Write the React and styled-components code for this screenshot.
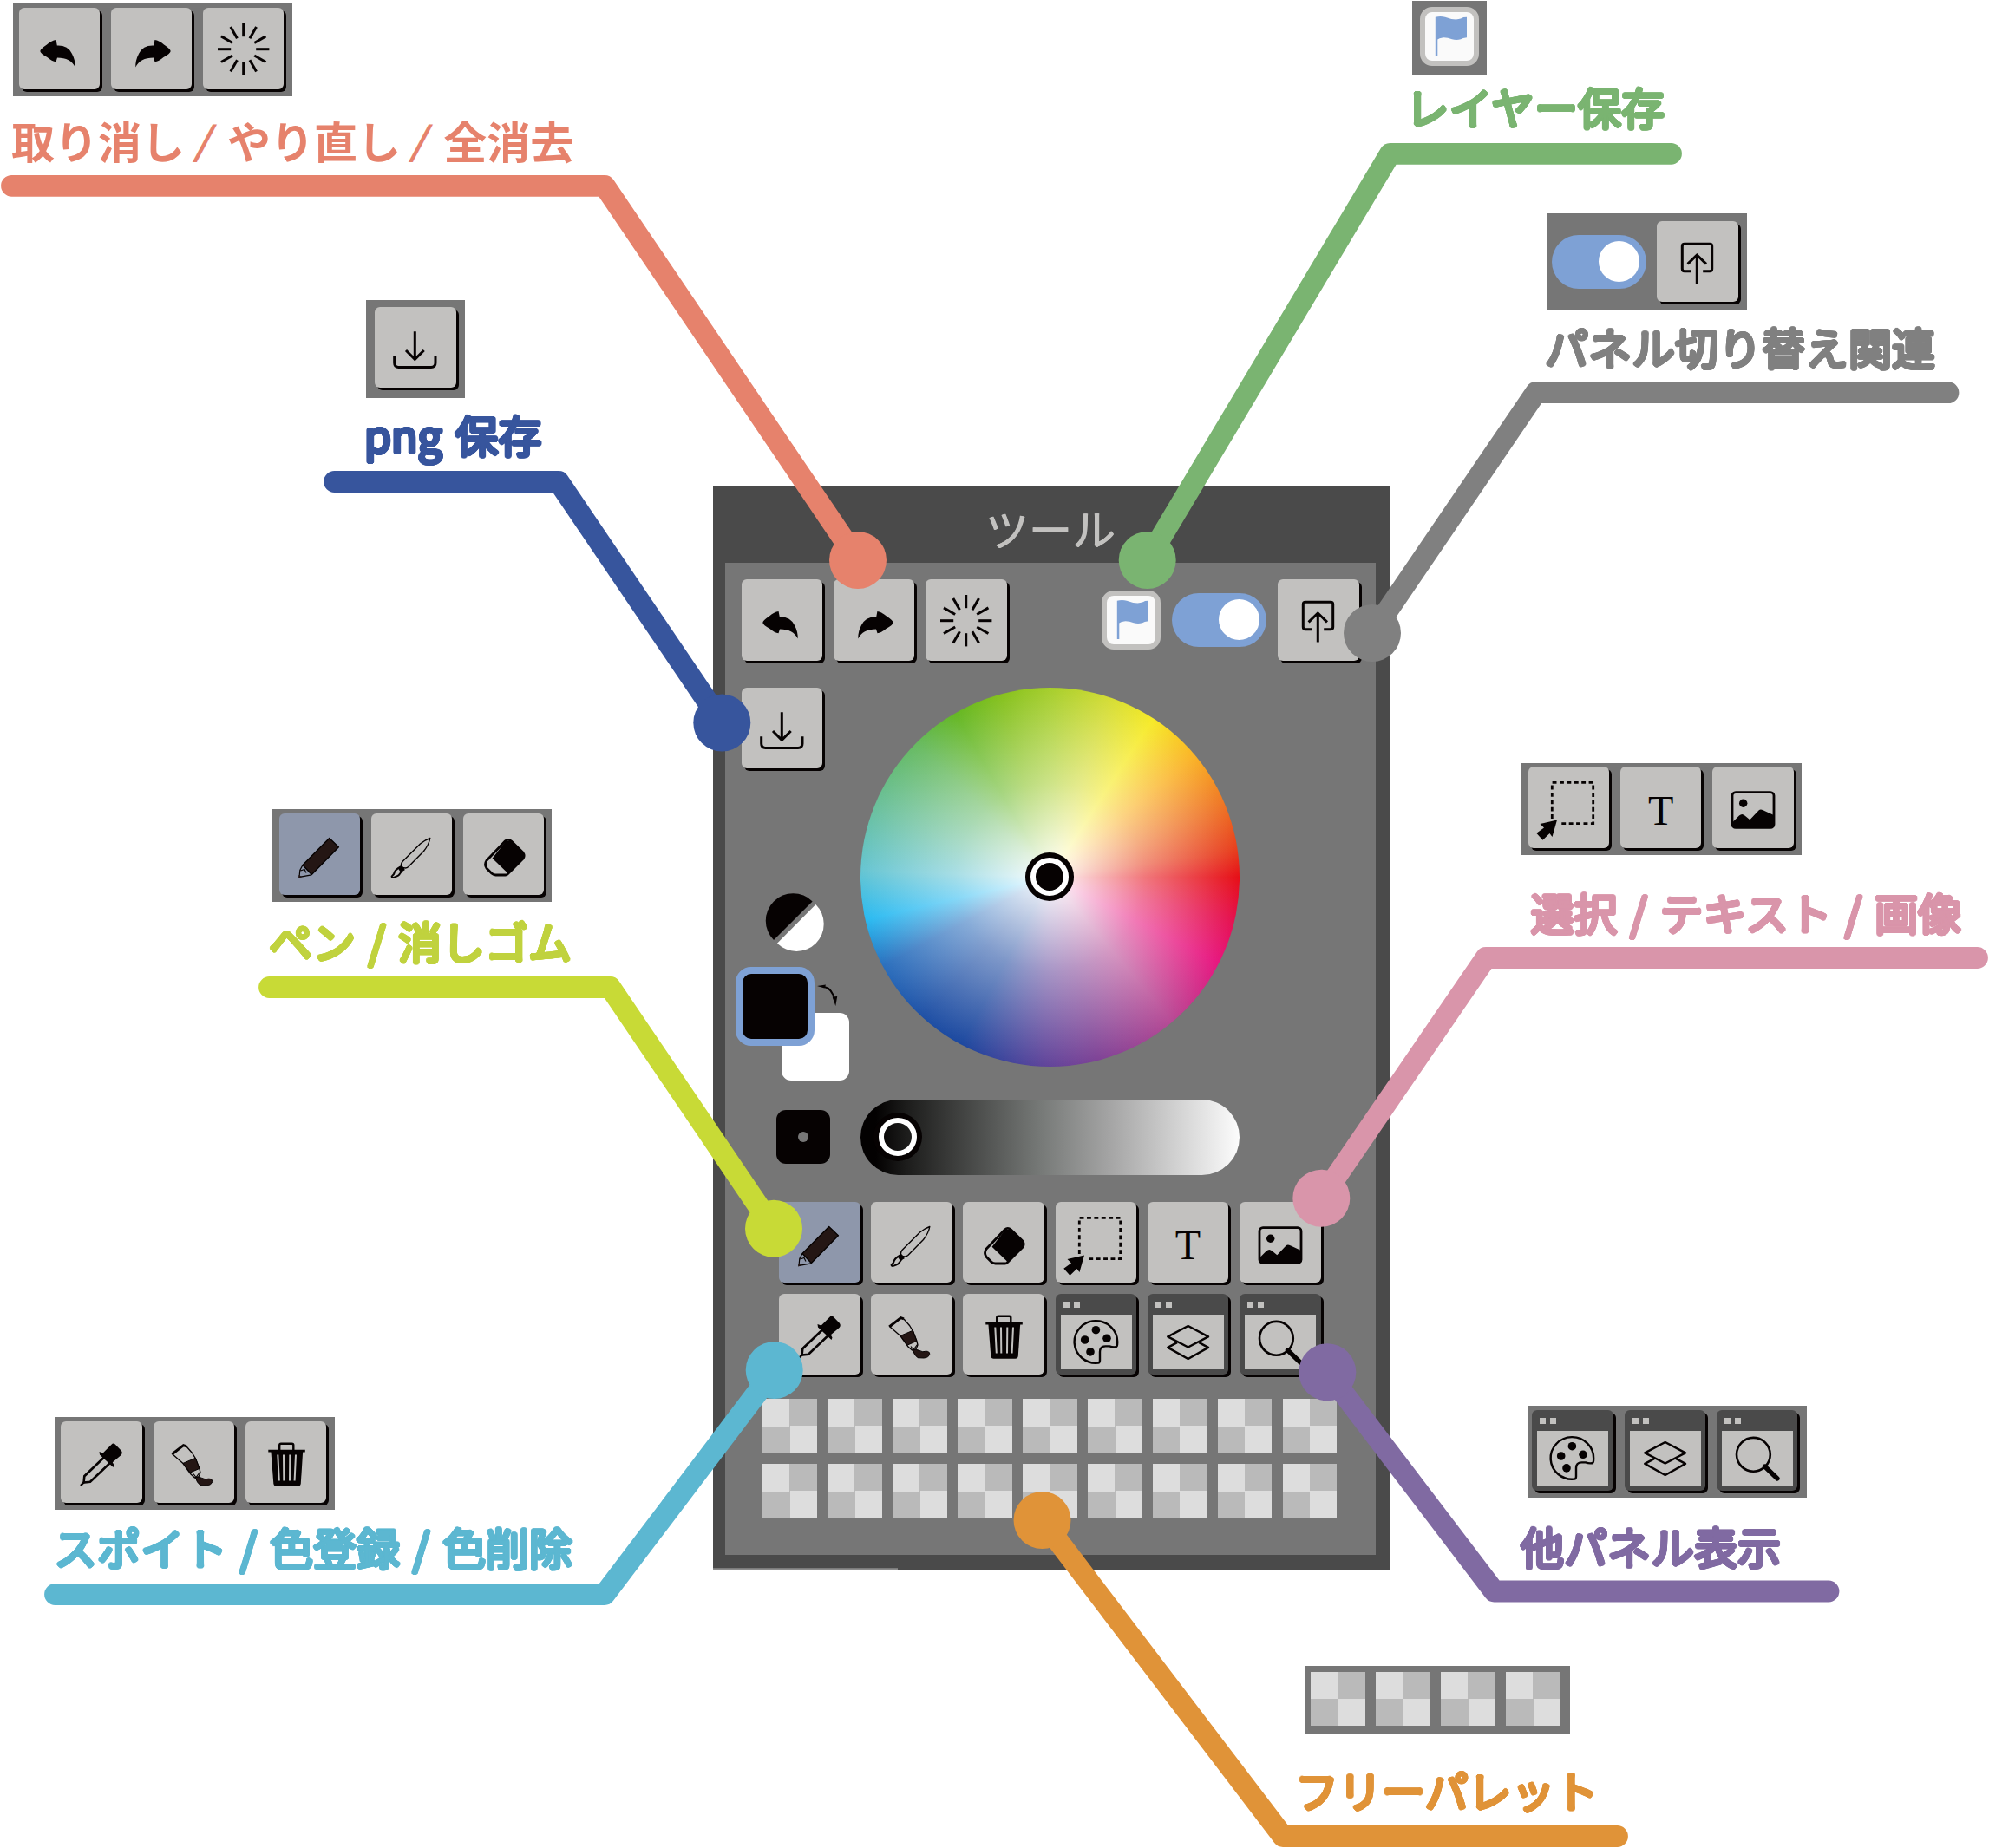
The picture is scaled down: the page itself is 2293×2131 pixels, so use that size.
import React from "react";
import styled, { createGlobalStyle, css } from "styled-components";

const GlobalStyle = createGlobalStyle`
  body { margin: 0; background: #fff; }
  * { box-sizing: border-box; }
`;

const ink = "#060202";
const face = "#c2c1bf";
const dark = "#4a4a4a";
const mid = "#767676";
const blue = "#7ea1d5";

const Board = styled.main`
  position: relative;
  width: 2293px;
  height: 2131px;
  overflow: hidden;
  background: #fff;
  font-family: "Noto Sans CJK JP", "Noto Sans", sans-serif;
`;

/* ---------- buttons ---------- */

const Key = styled.button`
  flex: none;
  display: flex;
  align-items: center;
  justify-content: center;
  width: 93.6px;
  height: 93.6px;
  padding: 0;
  border: 0;
  border-radius: 6px;
  color: ${ink};
  background: ${(p) => (p.$active ? "#8e97ab" : face)};
  box-shadow: 3px 3px 0 ${ink};
`;

const WindowKey = styled(Key)`
  background:
    linear-gradient(${face}, ${face}) 9px 9px / 7px 7px no-repeat,
    linear-gradient(${face}, ${face}) 21px 9px / 7px 7px no-repeat,
    linear-gradient(${face}, ${face}) 6px 24px / 82px 63px no-repeat,
    ${dark};
`;

const Glyph = styled.svg`
  flex: none;
  display: block;
  width: 93.6px;
  height: 93.6px;
  fill: none;
  stroke: currentColor;
  stroke-width: 3;
`;

const Letter = styled.span`
  font: 48px/1 "Liberation Serif", serif;
  padding-top: 7px;
  opacity: 0.999;
`;

const FlagBox = styled.div`
  flex: none;
  width: 68px;
  height: 68px;
  border: 6px solid ${face};
  border-radius: 14px;
  background: #fafafa;
  color: ${blue};
`;

const FlagSvg = styled.svg`
  display: block;
  width: 56px;
  height: 56px;
`;

const Track = styled.div`
  flex: none;
  display: flex;
  align-items: center;
  justify-content: flex-end;
  width: 109px;
  height: 62px;
  padding-right: 8px;
  border-radius: 31px;
  background: ${blue};
`;

const Knob = styled.div`
  width: 47px;
  height: 47px;
  border-radius: 50%;
  background: #fff;
`;

const undoPath =
  "M24.3 50Q24.6 47.4 32 42.5Q37.5 37.6 42.6 37L43.8 43.6Q56 43 61 53Q65 60.5 64.7 68.5Q59.5 57.6 44 57.5L42.5 62.3Q38 61.8 32.5 57Q24.8 53 24.3 50Z";

const glyphs = {
  undo: <path d={undoPath} fill="currentColor" stroke="none" />,
  redo: <path d={undoPath} fill="currentColor" stroke="none" transform="translate(93 0) scale(-1 1)" />,
  clear: (
    <g transform="translate(46.7 47.7)" strokeWidth="3">
      {Array.from({ length: 12 }, (_, i) => (
        <path key={i} d="M0 -14.5V-29.7" transform={`rotate(${i * 30})`} />
      ))}
    </g>
  ),
  download: (
    <>
      <path d="M46.3 28.3V60M36 50L46.3 60.3L56.7 50" />
      <path d="M22.7 56.3V64.5Q22.7 69.4 27.5 69.4H65Q70 69.4 70 64.5V56.3" />
    </>
  ),
  detach: (
    <>
      <path d="M39.8 57.7H32Q29.3 57.7 29.3 55V29Q29.3 26.3 32 26.3H61Q63.7 26.3 63.7 29V55Q63.7 57.7 61 57.7H53.2" />
      <path d="M46.3 72.5V39.5M35.6 49.4L46.3 39L57 49.4" />
    </>
  ),
  pen: (
    <>
      <path d="M57.7 28.6L68.4 38.7L37.3 70.6L27 59.5Z" fill="#241614" strokeWidth="1.4" strokeLinejoin="round" />
      <path d="M27 59.5L23.8 65.5L23 73.4L37 70.8M24.5 66L29 64.5L31 68.5" strokeWidth="1.2" />
      <path d="M22.4 71L26 73L22.4 74.5Z" fill="#241614" stroke="none" />
    </>
  ),
  brush: (
    <g strokeWidth="1.4" strokeLinejoin="round">
      <path d="M67.8 28.5Q62 30.5 56.5 35L36 55.5Q33.6 59 35 61.5Q39.5 64.4 42.8 61.5L60.5 43.5Q66.5 36 67.8 28.5Z" />
      <path d="M33.8 61.5Q27 65 26 70L23.6 72.7Q24 74.5 26.5 73.6Q32 72 33 69.5L37 64Z" strokeWidth="2" />
      <path d="M31.5 63L34.8 60.8L38 65L34 67Z" fill="currentColor" />
    </g>
  ),
  eraser: (
    <>
      <path
        d="M48.5 31.8Q51.8 28.8 55.5 32L68.8 45Q71.4 48.8 68.8 52.3L51.6 69.6Q50.3 71 48.5 71H37.5Q35 71 33 69.3L27 63.2Q24 58.8 27 54.2Z"
        strokeWidth="2.8"
        strokeLinejoin="round"
      />
      <path d="M33.6 51.8L49 32L56 32L69 46V52L51.5 69Z" fill="currentColor" stroke="none" />
    </>
  ),
  select: (
    <>
      <path d="M27.3 60V18.3H74.7V65.7H37.3" strokeWidth="2.8" strokeDasharray="4.9 3.5" />
      <path d="M33 61.5L13.5 66L18 70.5L9.3 76.8L16.5 84.7L24.5 77L27.5 81Z" fill="currentColor" stroke="none" />
    </>
  ),
  image: (
    <>
      <rect x="23" y="29.6" width="48" height="40.8" rx="4" strokeWidth="2.8" />
      <circle cx="35.7" cy="42.3" r="4.7" fill="currentColor" stroke="none" />
      <path
        d="M23 64.5L31 56.5Q34.3 53.5 37.5 56.5L43.3 61.3L53.5 50.5Q55.5 48.6 58.5 50.3L71 56V70H23Z"
        fill="currentColor"
        stroke="none"
      />
    </>
  ),
  dropper: (
    <>
      <path
        d="M58.5 26.8Q60.5 24.5 62.8 26.5L69.8 33.8Q71.8 36.2 69.6 39L59.8 47.2L61.5 50.5L60.5 53L45 38.5L44.5 35L48.7 36.6Z"
        fill="currentColor"
        stroke="none"
      />
      <path d="M50 41.5L27.3 63.2L26.6 70.5L34 69.8L56.8 48" strokeWidth="2.6" />
      <path d="M27 70L23 74" strokeWidth="2.4" />
    </>
  ),
  tube: (
    <>
      <path d="M21.2 38L34.5 27.6L38 28.8" strokeWidth="3" />
      <path d="M22 38L34 48.5M38 29L44.5 36.5L48.5 43L52.8 54L54 59L52 64L47.5 65L43 61L34 48.5" strokeWidth="1.3" />
      <path d="M34 48.4L48.4 42.3L52.8 54.5L42.3 59Z" fill="#241614" strokeWidth="1" />
      <path d="M46 60.5L49 64.5L53.5 58.5" strokeWidth="1.2" />
      <path
        d="M48.3 64.5Q52 63.5 55.5 65.3Q60 67.8 63.5 66.2Q67.8 66.2 67.7 69.5Q67 73.4 61 74L54 73.7Q50 71 48.3 64.5Z"
        fill="#241614"
        strokeWidth="1"
      />
    </>
  ),
  trash: (
    <>
      <path d="M39.2 33V27.5Q39.2 25.8 41 25.8H53.5Q55.3 25.8 55.3 27.5V33" strokeWidth="2.4" />
      <path d="M26.3 34.2H68.8" strokeWidth="2.8" />
      <path d="M29.4 34.5H66.2L63.8 71.5Q63.4 74.7 60.5 74.7H35.5Q32.7 74.7 32.3 71.5Z" fill="currentColor" stroke="none" />
      <path d="M37.3 38.5L38.8 68.5M44 38.5L44.3 68.5M51.3 38.5L51 68.5M58 38.5L56.6 68.5" stroke={face} strokeWidth="2" />
    </>
  ),
  palette: (
    <>
      <path
        d="M69.5 61.2Q71.2 61 71.2 56A24.8 24.3 0 1 0 49 79.6Q51 79.4 51 76.5V67Q51 60.4 57.5 60.4H62Q66 61.8 69.5 61.2Z"
        strokeWidth="2.4"
      />
      <g fill="currentColor" stroke="none">
        <circle cx="46.4" cy="41.7" r="4.8" />
        <circle cx="33.7" cy="53" r="4.8" />
        <circle cx="59" cy="51.3" r="4.8" />
        <circle cx="40" cy="66.9" r="4.8" />
      </g>
    </>
  ),
  layers: (
    <g strokeWidth="2.5" strokeLinejoin="round">
      <path d="M46.7 37L70 49.4L46.7 61.5L23.3 49.4Z" />
      <path d="M34 56.2L23.3 61.9L46.7 75L70 61.9L59.3 56.2" />
    </g>
  ),
  search: (
    <>
      <circle cx="42.4" cy="51.3" r="19.4" strokeWidth="2.6" />
      <path d="M55.5 65L70 79" strokeWidth="5.4" strokeLinecap="round" />
    </>
  ),
};

const windowed = ["palette", "layers", "search"];

function Tool({ name, active }) {
  const Base = windowed.includes(name) ? WindowKey : Key;
  return (
    <Base $active={active} aria-label={name}>
      {name === "text" ? <Letter>T</Letter> : <Glyph viewBox="0 0 93.6 93.6">{glyphs[name]}</Glyph>}
    </Base>
  );
}

function Flag() {
  return (
    <FlagBox>
      <FlagSvg viewBox="6 6 56 56">
        <path
          d="M17.8 11.7Q24 10.5 29 11.8Q36 14.5 41.5 14.6Q48 13.5 50 12L54 11.7V35.3Q49 36 47 37.2Q42 38.8 37 37.2Q31 35 26 35.4Q22 36 20.3 37.5V56H17.8Z"
          fill="currentColor"
        />
      </FlagSvg>
    </FlagBox>
  );
}

function Toggle() {
  return (
    <Track>
      <Knob />
    </Track>
  );
}

const Cell = styled.div`
  flex: none;
  width: 62.6px;
  height: 62.6px;
  background: conic-gradient(#bababa 25%, #dddddd 0 50%, #bababa 0 75%, #dddddd 0);
`;

/* ---------- panel ---------- */

const Panel = styled.section`
  position: absolute;
  left: 822px;
  top: 561px;
  display: flex;
  flex-direction: column;
  width: 781px;
  height: 1250px;
  padding: 0 17px 18px 14px;
  background: ${dark};
`;

const PanelTitle = styled.h1`
  flex: none;
  display: flex;
  align-items: center;
  justify-content: center;
  height: 88px;
  margin: 0;
  padding-top: 6px;
  color: ${face};
  font-size: 50px;
  font-weight: 400;
  line-height: 1;
  text-shadow: 0.5px 0 ${face}, -0.5px 0 ${face};
`;

const PanelBody = styled.div`
  flex: 1;
  padding: 19px 19px 0 18.6px;
  background: ${mid};
`;

const TopBar = styled.div`
  display: flex;
  align-items: center;
  gap: 12.6px;
`;

const TopRight = styled.div`
  display: flex;
  align-items: center;
  gap: 13px;
  margin-left: auto;
`;

const ColorArea = styled.div`
  display: grid;
  grid-template-columns: 137.4px 437px;
  margin-top: 31px;
`;

const SideColumn = styled.div`
  display: flex;
  flex-direction: column;
  align-items: flex-start;
`;

const MonoSvg = styled.svg`
  display: block;
  width: 69px;
  height: 69px;
  margin: 143px 0 0 27px;
`;

const SwatchPair = styled.div`
  position: relative;
  width: 131px;
  height: 131px;
  margin: 16.4px 0 0 -7px;
`;

const BackSwatch = styled.div`
  position: absolute;
  right: 0;
  bottom: 0;
  width: 78px;
  height: 78px;
  border-radius: 11px;
  background: #fff;
`;

const FrontSwatch = styled.div`
  position: absolute;
  left: 0;
  top: 0;
  width: 91px;
  height: 91px;
  border: 8px solid ${blue};
  border-radius: 18px;
  background: ${ink};
`;

const SwapSvg = styled.svg`
  position: absolute;
  left: 93px;
  top: 19px;
  width: 26px;
  height: 27px;
`;

const BrushSize = styled.div`
  display: flex;
  align-items: center;
  justify-content: center;
  width: 62px;
  height: 62px;
  margin: 34px 0 0 40px;
  border-radius: 11px;
  background: ${ink};

  &::after {
    content: "";
    width: 12px;
    height: 12px;
    border-radius: 50%;
    background: ${mid};
  }
`;

const WheelColumn = styled.div`
  display: flex;
  flex-direction: column;
  gap: 38px;
`;

const Wheel = styled.div`
  display: flex;
  align-items: center;
  justify-content: center;
  width: 437px;
  height: 437px;
  padding: 0 1px 1px 0;
  border-radius: 50%;
  background:
    radial-gradient(circle closest-side, #fff 0, rgba(255, 255, 255, 0.85) 12%, rgba(255, 255, 255, 0.43) 50%, rgba(255, 255, 255, 0) 100%),
    conic-gradient(
      #a6ce2c 0deg, #d3dc36 18deg, #f6ea28 33deg, #fab326 50deg, #ee7224 68deg, #e73c1c 82deg,
      #e60f17 90deg, #e5104e 103deg, #e7167f 117deg, #b74a95 140deg, #7f4396 165deg,
      #5f449a 182deg, #1c489f 208deg, #1f50a5 222deg, #2b6fbd 242deg, #2abaf1 257deg,
      #66c5d2 272deg, #6ac09c 292deg, #67ba60 315deg, #65b724 330deg, #86c11e 345deg, #a6ce2c 360deg
    );
`;

const ring = css`
  flex: none;
  border: 6px solid #fff;
  border-radius: 50%;
  box-shadow: 0 0 0 6px ${ink};
`;

const WheelMarker = styled.div`
  ${ring}
  width: 44px;
  height: 44px;
  background: ${ink};
`;

const Slider = styled.div`
  display: flex;
  align-items: center;
  height: 87px;
  padding-left: 21px;
  border-radius: 44px;
  background: linear-gradient(90deg, #030101 4%, #1c1c1b 12%, #757876 47%, #a5a5a5 66%, #fcfcfc);
`;

const SliderMarker = styled.div`
  ${ring}
  width: 44px;
  height: 44px;
`;

const ToolGrid = styled.div`
  display: grid;
  grid-template-columns: repeat(6, 93.6px);
  gap: 12.6px;
  margin: 31px 0 0 43.4px;
`;

const SwatchGrid = styled.div`
  display: grid;
  grid-template-columns: repeat(9, 62.6px);
  gap: 12.4px;
  margin: 28px 0 0 24.4px;
`;

const mainTools = [
  "pen", "brush", "eraser", "select", "text", "image",
  "dropper", "tube", "trash", "palette", "layers", "search",
];

function ToolPanel() {
  return (
    <Panel>
      <PanelTitle>ツール</PanelTitle>
      <PanelBody>
        <TopBar>
          <Tool name="undo" />
          <Tool name="redo" />
          <Tool name="clear" />
          <TopRight>
            <Flag />
            <Toggle />
            <Tool name="detach" />
          </TopRight>
        </TopBar>
        <ColorArea>
          <SideColumn>
            <Tool name="download" />
            <MonoSvg viewBox="0 0 69 69">
              <path d="M10 55A31.5 31.5 0 0 1 54.6 10.4Z" fill={ink} />
              <path d="M58.4 14.1A31.5 31.5 0 0 1 14 58.8Z" fill="#fff" />
            </MonoSvg>
            <SwatchPair>
              <BackSwatch />
              <FrontSwatch />
              <SwapSvg viewBox="0 0 26 27">
                <path d="M8 3.5Q19 6 21 19" fill="none" stroke={ink} strokeWidth="1.8" />
                <path d="M1 3L11 1.5L9.5 5.5ZM22.3 26L18.6 15.5L24.2 15Z" fill={ink} />
              </SwapSvg>
            </SwatchPair>
            <BrushSize />
          </SideColumn>
          <WheelColumn>
            <Wheel>
              <WheelMarker />
            </Wheel>
            <Slider>
              <SliderMarker />
            </Slider>
          </WheelColumn>
        </ColorArea>
        <ToolGrid>
          {mainTools.map((name) => (
            <Tool key={name} name={name} active={name === "pen"} />
          ))}
        </ToolGrid>
        <SwatchGrid>
          {Array.from({ length: 18 }, (_, i) => (
            <Cell key={i} />
          ))}
        </SwatchGrid>
      </PanelBody>
    </Panel>
  );
}

/* ---------- callouts ---------- */

const Leaders = styled.svg`
  position: absolute;
  inset: 0;
  width: 2293px;
  height: 2131px;
  fill: none;
  stroke-width: 24.8;
  stroke-linecap: round;
  stroke-linejoin: round;
  pointer-events: none;
`;

const CalloutBox = styled.section`
  position: absolute;
  left: ${(p) => p.$x}px;
  top: ${(p) => p.$y}px;
  display: flex;
  flex-direction: column;
  align-items: flex-start;
`;

const Chip = styled.div`
  display: flex;
  align-items: ${(p) => p.$align || "flex-start"};
  gap: ${(p) => p.$gap || 12.6}px;
  width: ${(p) => p.$w}px;
  height: ${(p) => p.$h}px;
  padding: ${(p) => p.$pad};
  background: ${mid};
`;

/* Offsets on a circle thicken the strokes and round off their ends. */
const halo = (r) =>
  Array.from({ length: 16 }, (_, i) => {
    const a = (i * Math.PI) / 8;
    return `${(Math.cos(a) * r).toFixed(2)}px ${(Math.sin(a) * r).toFixed(2)}px 0 currentColor`;
  }).join(",");

const Label = styled.p`
  margin: ${(p) => p.$gap}px 0 0 ${(p) => p.$shift || 0}px;
  color: ${(p) => p.$color};
  font-size: 50px;
  line-height: 1;
  white-space: nowrap;
  word-spacing: 3.5px;
  ${(p) =>
    p.$sharp
      ? css`
          font-weight: 700;
        `
      : css`
          font-weight: 400;
          text-shadow: ${halo(2)};
        `}
`;

const Slash = styled.span`
  display: inline-block;
  transform: ${(p) => (p.$sharp ? "translateY(-1px) skewX(-14deg) scaleY(0.88)" : "none")};
`;

const callouts = [
  {
    text: "取り消し / やり直し / 全消去", sharp: true, color: "#e6826c",
    x: 15, y: 4, w: 321.5, h: 107, pad: "5px 0 0 6.5px", labelTop: 136, shift: -2,
    items: ["undo", "redo", "clear"],
    line: "13.5,214.3 697,214.3 989,646",
  },
  {
    text: "png 保存", color: "#37559d",
    x: 422, y: 345.5, w: 114, h: 113.5, pad: "8px 0 0 10px", labelTop: 475, shift: -2,
    items: ["download"],
    line: "385.5,555.5 644,555.5 832.3,833.5",
  },
  {
    text: "レイヤー保存", color: "#7ab471",
    x: 1627.5, y: 1, w: 86.5, h: 86, pad: "7px 0 0 9.5px", labelTop: 97, shift: -7,
    items: ["flag"],
    line: "1926.5,177.3 1602.5,177.3 1322.7,646",
  },
  {
    text: "パネル切り替え関連", color: "#808080",
    x: 1783, y: 246, w: 231, h: 111, pad: "0 0 0 6px", align: "center", gap: 12.4, labelTop: 373.5, shift: -2,
    items: ["toggle", "detach"],
    line: "2246,452.7 1770.5,452.7 1582,730",
  },
  {
    text: "ペン / 消しゴム", color: "#c0d23e", lineColor: "#c8da36",
    x: 313, y: 933, w: 323, h: 107, pad: "5px 0 0 8.5px", labelTop: 1058.5, shift: -3,
    items: ["pen", "brush", "eraser"],
    line: "310.5,1138.5 703.5,1138.5 892,1416.7",
  },
  {
    text: "選択 / テキスト / 画像", color: "#d995aa",
    x: 1754, y: 880, w: 323, h: 106, pad: "4.4px 0 0 7.6px", labelTop: 1026, shift: 10.5,
    items: ["select", "text", "image"],
    line: "2279.5,1104.5 1713,1104.5 1523.3,1381.7",
  },
  {
    text: "スポイト / 色登録 / 色削除", color: "#5cb7d1",
    x: 63, y: 1634, w: 322.5, h: 107, pad: "5.4px 0 0 7.4px", labelTop: 1758, shift: -1,
    items: ["dropper", "tube", "trash"],
    line: "63.5,1838.5 697,1838.5 892.7,1580",
  },
  {
    text: "他パネル表示", color: "#806aa2",
    x: 1761, y: 1620.5, w: 322, h: 106, pad: "5.4px 0 0 5.4px", labelTop: 1756.5, shift: -8,
    items: ["palette", "layers", "search"],
    line: "2108,1835 1722.5,1835 1530.3,1582.3",
  },
  {
    text: "フリーパレット", color: "#e09338",
    x: 1505, y: 1920.5, w: 305, h: 79, pad: "7.4px 0 0 6.4px", gap: 12.4, labelTop: 2037.5, shift: -12,
    items: ["cell", "cell", "cell", "cell"],
    line: "1864.5,2117.5 1479,2117.5 1201.5,1753",
  },
];

function Item({ name }) {
  if (name === "flag") return <Flag />;
  if (name === "toggle") return <Toggle />;
  if (name === "cell") return <Cell />;
  return <Tool name={name} active={name === "pen"} />;
}

function LabelText({ text, sharp }) {
  return text.split("/").map((part, i) => (
    <React.Fragment key={i}>
      {i > 0 && <Slash $sharp={sharp}>/</Slash>}
      {part}
    </React.Fragment>
  ));
}

export default function App() {
  return (
    <Board>
      <GlobalStyle />
      <ToolPanel />
      {callouts.map((c) => (
        <CalloutBox key={c.text} $x={c.x} $y={c.y}>
          <Chip $w={c.w} $h={c.h} $pad={c.pad} $gap={c.gap} $align={c.align}>
            {c.items.map((name, i) => (
              <Item key={i} name={name} />
            ))}
          </Chip>
          <Label $color={c.color} $sharp={c.sharp} $shift={c.shift} $gap={c.labelTop - c.y - c.h}>
            <LabelText text={c.text} sharp={c.sharp} />
          </Label>
        </CalloutBox>
      ))}
      <Leaders viewBox="0 0 2293 2131">
        <path d="M822 1809.5H1035" stroke="#8c8c8c" strokeWidth="2.5" strokeLinecap="butt" />
        {callouts.map((c) => {
          const color = c.lineColor || c.color;
          const [cx, cy] = c.line.split(" ").pop().split(",");
          return (
            <g key={c.text} stroke={color}>
              <polyline points={c.line} />
              <circle cx={cx} cy={cy} r="33" fill={color} stroke="none" />
            </g>
          );
        })}
      </Leaders>
    </Board>
  );
}
